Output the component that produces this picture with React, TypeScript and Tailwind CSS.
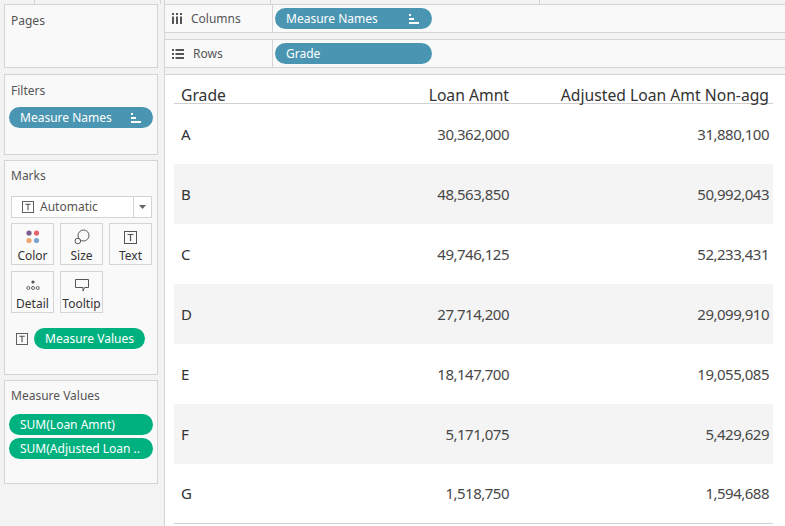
import React from "react";

const SortIcon = () => (
  <svg width="12" height="10" viewBox="0 0 12 10" className="shrink-0">
    <rect x="1" y="0" width="2" height="2" fill="white" />
    <rect x="1" y="4" width="5" height="2" fill="white" />
    <rect x="1" y="8" width="10" height="2" fill="white" />
  </svg>
);

const TBox = ({ size = 13 }: { size?: number }) => (
  <svg width={size} height={size} viewBox="0 0 13 13" className="shrink-0">
    <rect x="0.5" y="0.5" width="12" height="12" fill="none" stroke="#555" strokeWidth="1" />
    <path d="M3.5 3.5 H9.5 M6.5 3.5 V10" stroke="#555" strokeWidth="1.2" fill="none" />
  </svg>
);

const Pill = ({
  children,
  color,
  className = "",
}: {
  children: React.ReactNode;
  color: "teal" | "green";
  className?: string;
}) => (
  <div
    className={`flex h-[21px] items-center overflow-hidden whitespace-nowrap rounded-full px-[11px] text-[12px] leading-none text-white ${
      color === "teal" ? "bg-[#4a96b2]" : "bg-[#00b180]"
    } ${className}`}
  >
    {children}
  </div>
);

const MarkBtn = ({ icon, label }: { icon: React.ReactNode; label: string }) => (
  <div className="flex h-[42px] w-[43px] flex-col items-center justify-between border border-[#d4d4d4] bg-[#fafafa] pb-[2px] pt-[4px]">
    <div className="flex h-[18px] items-center justify-center">{icon}</div>
    <div className="text-[12px] leading-none text-[#333]">{label}</div>
  </div>
);

const rows: [string, string, string][] = [
  ["A", "30,362,000", "31,880,100"],
  ["B", "48,563,850", "50,992,043"],
  ["C", "49,746,125", "52,233,431"],
  ["D", "27,714,200", "29,099,910"],
  ["E", "18,147,700", "19,055,085"],
  ["F", "5,171,075", "5,429,629"],
  ["G", "1,518,750", "1,594,688"],
];

export default function App() {
  return (
    <div
      className="flex h-[526px] w-[785px] overflow-hidden bg-[#f3f3f3]"
      style={{ fontFamily: '"Noto Sans", "Open Sans", sans-serif' }}
    >
      {/* Sidebar */}
      <div className="flex w-[165px] shrink-0 flex-col border-r border-[#d4d4d4]">
        <div className="flex h-[4px] shrink-0">
          <div className="w-[35px] border-r border-[#d4d4d4]" />
          <div className="w-[126px] border-r border-[#d4d4d4]" />
        </div>
        <div className="ml-[4px] flex w-[154px] flex-col">
          {/* Pages */}
          <div className="h-[64px] border border-[#d4d4d4] bg-[#f9f9f9] px-[6px] pt-[10px] text-[12px] leading-none text-[#555]">
            Pages
          </div>
          {/* Filters */}
          <div className="mt-[6px] h-[81px] border border-[#d4d4d4] bg-[#f9f9f9] px-[4px] pt-[10px]">
            <div className="px-[2px] text-[12px] leading-none text-[#555]">Filters</div>
            <Pill color="teal" className="mt-[10px] justify-between">
              <span>Measure Names</span>
              <SortIcon />
            </Pill>
          </div>
          {/* Marks */}
          <div className="mt-[5px] h-[215px] border border-[#d4d4d4] bg-[#f9f9f9] px-[6px] pt-[9px]">
            <div className="text-[12px] leading-none text-[#555]">Marks</div>
            <div className="mt-[14px] flex h-[22px] w-[141px] items-center border border-[#d4d4d4] bg-white">
              <div className="flex flex-1 items-center gap-[6px] pl-[10px] text-[12px] text-[#555]">
                <TBox size={12} />
                <span>Automatic</span>
              </div>
              <div className="flex h-full w-[18px] items-center justify-center border-l border-[#d4d4d4]">
                <svg width="7" height="4" viewBox="0 0 7 4">
                  <path d="M0 0 H7 L3.5 4 Z" fill="#666" />
                </svg>
              </div>
            </div>
            <div className="mt-[5px] grid w-[141px] grid-cols-[43px_43px_43px] gap-x-[6px] gap-y-[6px]">
              <MarkBtn
                label="Color"
                icon={
                  <svg width="14" height="14" viewBox="0 0 14 14">
                    <circle cx="3" cy="3" r="2.6" fill="#7b5c8f" />
                    <circle cx="10.5" cy="3" r="2.6" fill="#e7606d" />
                    <circle cx="3" cy="10.5" r="2.6" fill="#f0a46f" />
                    <circle cx="10.5" cy="10.5" r="2.6" fill="#7fa3cf" />
                  </svg>
                }
              />
              <MarkBtn
                label="Size"
                icon={
                  <svg width="16" height="16" viewBox="0 0 16 16">
                    <circle cx="9.5" cy="6.5" r="5.5" fill="none" stroke="#555" strokeWidth="1" />
                    <circle cx="3.8" cy="12" r="2.8" fill="#fafafa" stroke="#555" strokeWidth="1" />
                  </svg>
                }
              />
              <MarkBtn label="Text" icon={<TBox size={13} />} />
              <MarkBtn
                label="Detail"
                icon={
                  <svg width="14" height="12" viewBox="0 0 14 12">
                    <circle cx="7" cy="3" r="1.6" fill="#555" />
                    <circle cx="2.3" cy="9" r="1.5" fill="none" stroke="#555" strokeWidth="0.9" />
                    <circle cx="7" cy="9" r="1.5" fill="none" stroke="#555" strokeWidth="0.9" />
                    <circle cx="11.7" cy="9" r="1.5" fill="none" stroke="#555" strokeWidth="0.9" />
                  </svg>
                }
              />
              <MarkBtn
                label="Tooltip"
                icon={
                  <svg width="16" height="15" viewBox="0 0 16 15">
                    <path
                      d="M1.5 1.5 H14.5 V9.5 H10.5 L9 13 V9.5 H1.5 Z"
                      fill="none"
                      stroke="#555"
                      strokeWidth="1"
                      strokeLinejoin="round"
                    />
                  </svg>
                }
              />
            </div>
            <div className="mt-[15px] flex items-center gap-[6px] pl-[5px]">
              <TBox size={12} />
              <Pill color="green" className="h-[20px] w-[111px] justify-center">
                Measure Values
              </Pill>
            </div>
          </div>
          {/* Measure Values */}
          <div className="mt-[5px] h-[104px] border border-[#d4d4d4] bg-[#f9f9f9] px-[4px] pt-[9px]">
            <div className="px-[2px] text-[12px] leading-none text-[#555]">Measure Values</div>
            <Pill color="green" className="mt-[12px]">SUM(Loan Amnt)</Pill>
            <Pill color="green" className="mt-[3px]">SUM(Adjusted Loan ..</Pill>
          </div>
        </div>
      </div>

      {/* Main */}
      <div className="flex min-w-0 flex-1 flex-col">
        <div className="flex h-[4px] shrink-0">
          <div className="w-[106px] border-r border-[#d4d4d4]" />
          <div className="w-[269px] border-r border-[#d4d4d4]" />
        </div>
        {/* Columns shelf */}
        <div className="flex h-[29px] border-y border-[#d4d4d4] bg-[#f9f9f9]">
          <div className="flex w-[108px] items-center gap-[9px] border-r border-[#d4d4d4] pl-[7px] text-[12px] text-[#555]">
            <svg width="10" height="11" viewBox="0 0 10 11">
              <rect x="0" y="0" width="2" height="2" fill="#555" />
              <rect x="4" y="0" width="2" height="2" fill="#555" />
              <rect x="8" y="0" width="2" height="2" fill="#555" />
              <rect x="0" y="3.5" width="2" height="7.5" fill="#555" />
              <rect x="4" y="3.5" width="2" height="7.5" fill="#555" />
              <rect x="8" y="3.5" width="2" height="7.5" fill="#555" />
            </svg>
            <span>Columns</span>
          </div>
          <div className="flex items-center pl-[2px]">
            <Pill color="teal" className="w-[157px] justify-between pr-[12px]">
              <span>Measure Names</span>
              <SortIcon />
            </Pill>
          </div>
        </div>
        {/* Rows shelf */}
        <div className="mt-[6px] flex h-[29px] border-y border-[#d4d4d4] bg-[#f9f9f9]">
          <div className="flex w-[108px] items-center gap-[9px] border-r border-[#d4d4d4] pl-[7px] text-[12px] text-[#555]">
            <svg width="12" height="10" viewBox="0 0 12 10">
              <rect x="0" y="0" width="2" height="2" fill="#555" />
              <rect x="3.5" y="0" width="8.5" height="2" fill="#555" />
              <rect x="0" y="4" width="2" height="2" fill="#555" />
              <rect x="3.5" y="4" width="8.5" height="2" fill="#555" />
              <rect x="0" y="8" width="2" height="2" fill="#555" />
              <rect x="3.5" y="8" width="8.5" height="2" fill="#555" />
            </svg>
            <span>Rows</span>
          </div>
          <div className="flex items-center pl-[2px]">
            <Pill color="teal" className="w-[157px]">Grade</Pill>
          </div>
        </div>
        {/* Viz */}
        <div className="mt-[6px] flex-1 border-t border-[#d4d4d4] bg-white pl-[9px] pr-[12px]">
          <div className="w-[599px] text-[#333]">
            <div className="grid h-[29px] grid-cols-[175px_160px_1fr] items-end border-b border-[#d0d0d0] text-[15.7px] leading-[16px]">
              <div className="pl-[7px]">Grade</div>
              <div className="text-right">Loan Amnt</div>
              <div className="pr-[4px] text-right">Adjusted Loan Amt Non-agg</div>
            </div>
            {rows.map(([g, a, b], i) => (
              <div
                key={g}
                className={`grid h-[60px] grid-cols-[175px_160px_1fr] items-center text-[15px] ${
                  i % 2 === 1 ? "bg-[#f4f4f4]" : "bg-white"
                } ${i === rows.length - 1 ? "border-b border-[#d0d0d0]" : ""}`}
              >
                <div className="pl-[7px]">{g}</div>
                <div className="text-right tracking-[-0.5px] text-[#484848]">{a}</div>
                <div className="pr-[4px] text-right tracking-[-0.5px] text-[#484848]">{b}</div>
              </div>
            ))}
          </div>
        </div>
      </div>
    </div>
  );
}
